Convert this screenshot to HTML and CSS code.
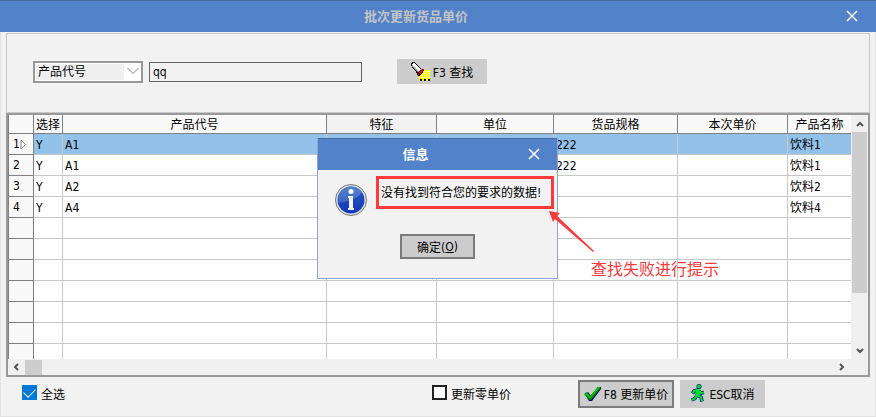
FILE: index.html
```html
<!DOCTYPE html>
<html lang="zh-CN">
<head>
    <meta charset="UTF-8">
    <meta name="viewport" content="width=device-width, initial-scale=1.0">
    <title>批次更新货品单价</title>
    <link rel="stylesheet" href="styles.css">
</head>
<body>
    <div class="window">
        <div class="titlebar">
            <h1 class="title">批次更新货品单价</h1>
            <button class="close" aria-label="关闭">
                <svg width="12" height="12" viewBox="0 0 12 12"><path d="M1 1 11 11M11 1 1 11"/></svg>
            </button>
        </div>

        <div class="content">
            <form class="search">
                <div class="select">
                    <select aria-label="查找字段">
                        <option>产品代号</option>
                    </select>
                    <svg class="arrow" width="12" height="8" viewBox="0 0 12 8"><path d="M0.500 1 6 6.500 11.500 1"/></svg>
                </div>
                <input class="keyword" type="text" value="qq" aria-label="关键字">
                <button class="btn find" type="button">
                    <!-- flashlight -->
                    <svg width="19" height="19" viewBox="0 0 19 19" shape-rendering="crispEdges">
                        <path fill="#ff0" d="M12 8h7v11H8v-6h2v-3h2z"/>
                        <path fill="#fff" d="M13 9h1v1h-1zM15 9h1v1h-1zM17 9h1v1h-1zM13 11h1v1h-1zM15 11h1v1h-1zM17 11h1v1h-1zM11 13h1v1h-1zM13 13h1v1h-1zM15 13h1v1h-1zM17 13h1v1h-1zM9 15h1v1H9zM11 15h1v1h-1zM13 15h1v1h-1zM15 15h1v1h-1zM17 15h1v1h-1z"/>
                        <path fill="#000" d="M9 17h2v2H9zM13 17h2v2h-2zM17 17h2v2h-2z"/>
                        <path fill="#000" d="M1 0h3v1h1v1h1v1h1v1h1v1h1v1h1v1h3v2h-1v2h-1v1h-1v1H9v1H7v-1H6v-2H5V9H4V8H3V7H2V6H1V4H0V1h1z"/>
                        <path fill="#fff" d="M2 1h2v1h1v1h1v1h1v1h1v1h1v1h1v1H9v1H8v1H7V9H6V8H5V7H4V6H3V5H2V4H1V2h1z"/>
                        <path fill="#999" d="M1 3h1v1h1v1h1v1h1v1h1v1h1v1h1v1H6V9H5V8H4V7H3V6H2V5H1z"/>
                        <path fill="#e00000" d="M10 7h3v1h-1v2h-1v1h-1v1H8v1H7v-2h1v-1h1V9h1z"/>
                    </svg>
                    <span>F3 查找</span>
                </button>
            </form>

            <div class="grid">
                <div class="view">
                    <table>
                        <colgroup>
                            <col class="c-num"><col class="c-sel"><col class="c-code"><col class="c-attr">
                            <col class="c-unit"><col class="c-spec"><col class="c-price"><col>
                        </colgroup>
                        <thead>
                            <tr>
                                <th></th>
                                <th>选择</th>
                                <th>产品代号</th>
                                <th class="dim">特征</th>
                                <th>单位</th>
                                <th>货品规格</th>
                                <th>本次单价</th>
                                <th>产品名称</th>
                            </tr>
                        </thead>
                        <tbody>
                            <tr class="current">
                                <th scope="row">1<svg width="7" height="11" viewBox="0 0 7 11"><path d="M1 1 5.500 5.500 1 10z"/></svg></th>
                                <td>Y</td><td>A1</td><td></td><td></td><td>222</td><td></td><td>饮料1</td>
                            </tr>
                            <tr><th scope="row">2</th><td>Y</td><td>A1</td><td></td><td></td><td>222</td><td></td><td>饮料1</td></tr>
                            <tr><th scope="row">3</th><td>Y</td><td>A2</td><td></td><td></td><td></td><td></td><td>饮料2</td></tr>
                            <tr><th scope="row">4</th><td>Y</td><td>A4</td><td></td><td></td><td></td><td></td><td>饮料4</td></tr>
                            <tr><th></th><td></td><td></td><td></td><td></td><td></td><td></td><td></td></tr>
                            <tr><th></th><td></td><td></td><td></td><td></td><td></td><td></td><td></td></tr>
                            <tr><th></th><td></td><td></td><td></td><td></td><td></td><td></td><td></td></tr>
                            <tr><th></th><td></td><td></td><td></td><td></td><td></td><td></td><td></td></tr>
                            <tr><th></th><td></td><td></td><td></td><td></td><td></td><td></td><td></td></tr>
                            <tr><th></th><td></td><td></td><td></td><td></td><td></td><td></td><td></td></tr>
                            <tr><th></th><td></td><td></td><td></td><td></td><td></td><td></td><td></td></tr>
                        </tbody>
                    </table>
                </div>
                <div class="vscroll">
                    <svg width="8" height="6" viewBox="0 0 8 6"><path d="M1 5 4 2 7 5"/></svg>
                    <div class="vthumb"></div>
                    <svg width="8" height="6" viewBox="0 0 8 6"><path d="M1 1 4 4 7 1"/></svg>
                </div>
                <div class="hscroll">
                    <svg width="6" height="8" viewBox="0 0 6 8"><path d="M5 1 2 4 5 7"/></svg>
                    <div class="hthumb"></div>
                    <svg width="6" height="8" viewBox="0 0 6 8"><path d="M1 1 4 4 1 7"/></svg>
                </div>
            </div>
        </div>

        <div class="footer">
            <label class="check"><input type="checkbox" checked>全选</label>
            <label class="check zero"><input type="checkbox">更新零单价</label>
            <div class="actions">
                <button class="btn default">
                    <svg width="17" height="16" viewBox="0 0 17 16">
                        <path fill="#000080" d="M1 8 4 6 7 10 14 1 17 1 17 3 8 15 5 15z"/>
                        <path fill="#008000" d="M0 8 3 6 6 10 14 1 16 1 16 3 7 14 5 14z"/>
                        <path fill="#00d800" d="M1 8 3 7 6 11 14 1 16 1 6 12.500z"/>
                    </svg>
                    <span>F8 更新单价</span>
                </button>
                <button class="btn cancel">
                    <!-- running man -->
                    <svg width="16" height="19" viewBox="0 0 16 19">
                        <g fill="none" stroke="#000080" stroke-width="3.500" stroke-linejoin="round">
                            <path d="M8 5.500 7 11M8 6 4 7 2.500 9.500M8 6 11 9 14 8.500M7 11 5 14.500 1.500 16M7 11 11 13 12 17.500"/>
                        </g>
                        <circle cx="9" cy="2.500" r="2.500" fill="#000080"/>
                        <g fill="none" stroke="#00dd33" stroke-width="2.200" stroke-linejoin="round">
                            <path d="M8 5.500 7 11M8 6 4 7 2.500 9.500M8 6 11 9 14 8.500M7 11 5 14.500 1.500 16M7 11 11 13 12 17.500"/>
                        </g>
                        <path fill="#00dd33" d="M6 5h4l1 3-2 4H5z"/>
                        <circle cx="9" cy="2.500" r="1.900" fill="#00dd33"/>
                    </svg>
                    <span>ESC取消</span>
                </button>
            </div>
        </div>

        <div class="dialog" role="dialog" aria-labelledby="dlg-title">
            <div class="titlebar">
                <h2 class="title" id="dlg-title">信息</h2>
                <button class="close" aria-label="关闭">
                    <svg width="12" height="12" viewBox="0 0 12 12"><path d="M1 1 11 11M11 1 1 11"/></svg>
                </button>
            </div>
            <div class="dialog-body">
                <svg width="34" height="34" viewBox="0 0 34 34">
                    <defs>
                        <linearGradient id="ball" x1="0" y1="0" x2="0" y2="1">
                            <stop offset="0" stop-color="#2b55b4"/>
                            <stop offset="1" stop-color="#1338c0"/>
                        </linearGradient>
                        <linearGradient id="shine" x1="0" y1="0" x2="0" y2="1">
                            <stop offset="0" stop-color="#5580d0"/>
                            <stop offset="1" stop-color="#3a66c4"/>
                        </linearGradient>
                    </defs>
                    <circle cx="17" cy="17" r="15.500" fill="#e4e4e4" stroke="#777" stroke-width="1"/>
                    <circle cx="17" cy="17" r="13.500" fill="url(#ball)"/>
                    <path fill="url(#shine)" d="M4 20A13.500 13.500 0 0 1 28 9Q24 17 4 20z"/>
                    <circle cx="17" cy="8.500" r="2.500" fill="#fff"/>
                    <path fill="#f4f4f4" d="M14 13h5v12h1v2h-6v-2h1V15h-1z"/>
                </svg>
                <p class="message">没有找到符合您的要求的数据!</p>
            </div>
            <div class="dialog-foot">
                <button class="btn default ok">确定(<u>O</u>)</button>
            </div>

            <svg class="pointer" width="46" height="42" viewBox="0 0 46 42">
                <path d="M0 0 11 2 8 5 45 40 44 41 6 8 4 11z"/>
            </svg>
            <p class="note">查找失败进行提示</p>
        </div>
    </div>
</body>
</html>
```
FILE: styles.css
```css
*{
    box-sizing: border-box;
}
body{
    margin: 0;
    background-color: #f2f2f2;
}
body, button, input, select{
    font-family: "DejaVu Sans Condensed", "Noto Sans CJK SC", sans-serif;
    font-size: 12px;
    color: #000;
}
h1, h2, p{
    margin: 0;
}
svg{
    display: block;
    flex: none;
}
.window{
    position: relative;
    display: flex;
    flex-direction: column;
    height: 100vh;
    min-height: 400px;
    border: 1px solid #e3e3e3;
    border-top: none;
}

/* title bars */
.titlebar{
    display: flex;
    height: 32px;
    background-color: #5182ca;
    border-top: 1px solid #46699f;
}
.window > .titlebar{
    margin: 0 -1px;
    padding: 0 1px;
}
.title{
    flex: 1;
    text-align: center;
    font-size: 13px;
    line-height: 32px;
    color: #c3c3c3;
}
.close{
    display: flex;
    align-items: center;
    justify-content: center;
    width: 44px;
    padding: 0 2px 2px 0;
    border: none;
    background: none;
}
.close path{
    fill: none;
    stroke: #fff;
    stroke-width: 1.5;
}

.content{
    flex: 1;
    display: flex;
    flex-direction: column;
    min-height: 0;
    padding: 1px 5px 0;
}
.btn{
    display: flex;
    align-items: center;
    justify-content: center;
    gap: 3px;
    height: 28px;
    padding: 0;
    border: none;
    background-color: #ccc;
    white-space: nowrap;
}
.btn.default{
    border: 2px solid #7b7b7b;
}

/* search bar */
.search{
    display: flex;
    align-items: center;
    height: 80px;
    padding: 0 26px 3px;
    border: 1px solid #c8c8c8;
}
.select{
    position: relative;
    margin-right: 6px;
}
.select select{
    appearance: none;
    display: block;
    width: 110px;
    height: 22px;
    padding: 0 18px 0 3px;
    border: 2px solid #999;
    border-radius: 0;
    background: linear-gradient(#efefef, #efefef) 1px 1px / 88px 16px no-repeat #fff;
}
.select .arrow{
    position: absolute;
    right: 4px;
    top: 6px;
    fill: none;
    stroke: #808080;
    pointer-events: none;
}
.keyword{
    width: 213px;
    height: 20px;
    padding: 0 3px;
    border: 1px solid #666;
    background-color: #f2f2f2;
}
.find{
    width: 90px;
    height: 25px;
    margin-left: 35px;
}

/* data grid */
.grid{
    flex: 1;
    display: grid;
    grid-template-columns: 1fr 17px;
    grid-template-rows: 1fr 16px;
    min-height: 0;
    border: 2px solid #999;
    background-color: #f0f0f0;
}
.view{
    overflow: hidden;
    min-height: 0;
    background-color: #fff;
}
table{
    width: 100%;
    table-layout: fixed;
    border-collapse: separate;
    border-spacing: 0;
    border-left: 1px solid #808080;
}
.c-num{ width: 25px; }
.c-sel{ width: 29px; }
.c-code{ width: 264px; }
.c-attr{ width: 110px; }
.c-unit{ width: 117px; }
.c-spec{ width: 124px; }
.c-price{ width: 110px; }
th, td{
    padding: 0 2px;
    white-space: nowrap;
    font-weight: normal;
}
th{
    background-color: #f9f9f9;
    border-right: 1px solid #808080;
    border-bottom: 1px solid #808080;
}
td{
    height: 21px;
    padding-top: 2px;
    line-height: 18px;
    border-right: 1px solid #c8c8c8;
    border-bottom: 1px solid #c8c8c8;
}
thead th{
    height: 19px;
    padding: 2px 0 0;
    line-height: 16px;
}
thead th.dim{
    background-color: #f2f2f2;
}
th:last-child, td:last-child{
    border-right: none;
}
tbody th{
    padding: 0 4px;
    line-height: 18px;
    text-align: left;
}
tbody th svg{
    display: inline-block;
    vertical-align: middle;
    fill: #fff;
    stroke: #888;
}
.current td{
    background-color: #92c1e9;
}

/* scroll bars */
.vscroll, .hscroll{
    display: flex;
    align-items: center;
}
.vscroll{
    flex-direction: column;
    padding: 6px 0 5px;
}
.hscroll{
    padding: 0 6px 0 5px;
}
.vscroll path, .hscroll path{
    fill: none;
    stroke: #555;
    stroke-width: 2;
}
.vthumb{
    width: 15px;
    height: 161px;
    margin: 5px 0 auto;
    background-color: #cdcdcd;
}
.hthumb{
    width: 17px;
    height: 15px;
    margin: 0 auto 0 6px;
    background-color: #cdcdcd;
}

/* footer */
.footer{
    display: flex;
    align-items: center;
    height: 39px;
    padding: 0 110px 6px 21px;
}
.check{
    display: flex;
    align-items: center;
    gap: 4px;
}
.check input{
    appearance: none;
    display: flex;
    justify-content: center;
    width: 15px;
    height: 15px;
    margin: 0 0 2px;
    border: 2px solid #222;
    background-color: #fff;
}
.check input:checked{
    border-color: #0078d7;
    background-color: #0078d7;
}
.check input:checked::after{
    content: "";
    width: 6px;
    height: 10px;
    border: solid #fff;
    border-width: 0 1px 1px 0;
    transform: rotate(45deg);
    margin-top: -1px;
}
.zero{
    margin-left: auto;
    margin-right: 67px;
}
.actions{
    display: flex;
    gap: 6px;
}
.actions .default{
    width: 96px;
}
.cancel{
    width: 85px;
}

/* message box */
.dialog{
    position: absolute;
    left: calc(50% - 121px);
    top: 138px;
    width: 241px;
    background-color: #f2f2f2;
    border: 1px solid #8aa5d3;
    border-top: none;
}
.dialog .title{
    color: #fff;
}
.dialog-body{
    display: flex;
    align-items: flex-start;
    gap: 8px;
    padding: 6px 3px 0 16px;
}
.dialog-body svg{
    margin-top: 7px;
}
.message{
    flex: 1;
    height: 33px;
    padding-left: 2px;
    border: 3px solid #fc3a3a;
    line-height: 28px;
    white-space: nowrap;
}
.dialog-foot{
    display: flex;
    justify-content: center;
    padding: 17px 0 19px;
}
.ok{
    gap: 0;
    width: 75px;
    height: 25px;
}
.pointer{
    position: absolute;
    left: 231px;
    top: 73px;
    fill: #fc3a3a;
}
.note{
    position: absolute;
    left: 273px;
    top: 120px;
    font-size: 16px;
    line-height: 24px;
    color: #fc3a3a;
    white-space: nowrap;
}
```
